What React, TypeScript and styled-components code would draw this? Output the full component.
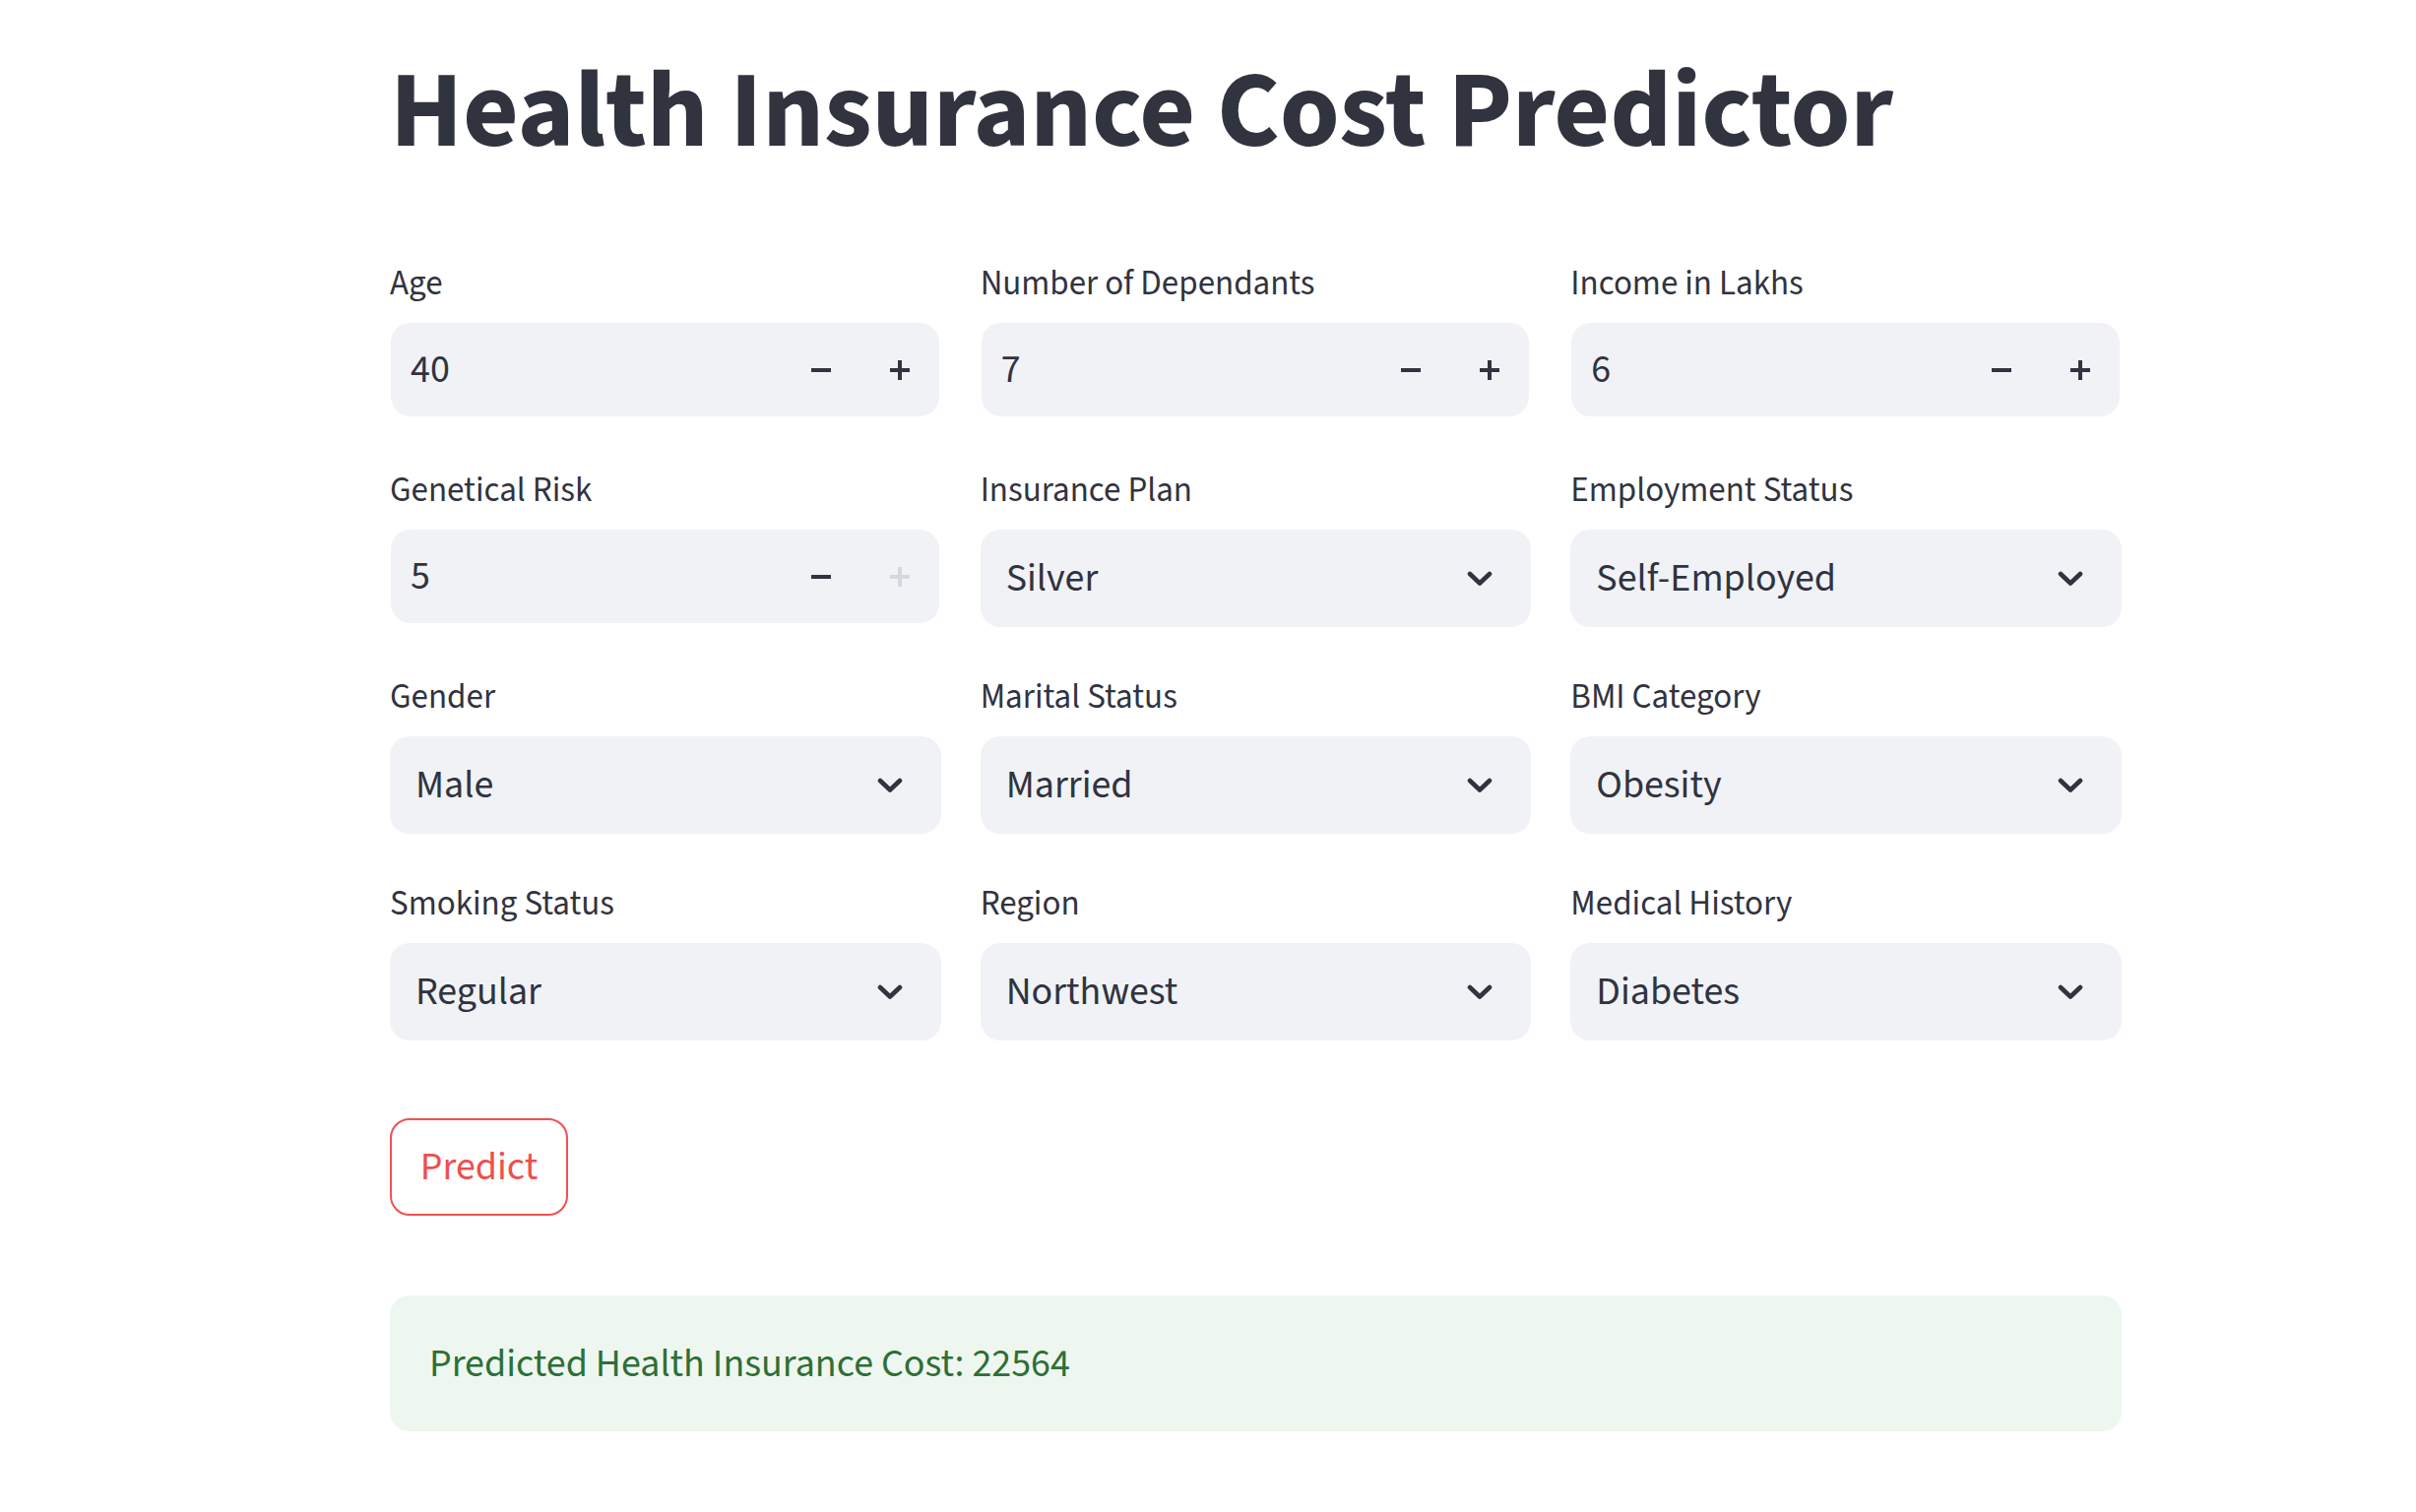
import React from "react";
import styled, { createGlobalStyle } from "styled-components";

const GlobalStyle = createGlobalStyle`
  html, body {
    margin: 0;
    padding: 0;
    background: #ffffff;
  }
  body {
    font-family: "Source Sans Pro", "Source Sans 3", Lato, "Noto Sans", sans-serif;
    color: #31333f;
  }
`;

const Page = styled.main`
  width: 1759px;
  margin-left: 396px;
  padding-top: 48px;
  padding-bottom: 80px;
`;

const Title = styled.h1`
  margin: 0;
  font-size: 110px;
  font-weight: 700;
  line-height: 132px;
  letter-spacing: -0.15px;
  color: #31333f;
`;

const Form = styled.section`
  margin-top: 80px;
  display: grid;
  grid-template-columns: repeat(3, 1fr);
  grid-auto-rows: 170px;
  column-gap: 40px;
  row-gap: 40px;
`;

const Field = styled.div`
  display: flex;
  flex-direction: column;
`;

const Label = styled.label`
  font-size: 35px;
  line-height: 56px;
  height: 56px;
  margin-bottom: 12px;
  color: #31333f;
`;

const NumberBox = styled.div`
  display: flex;
  align-items: center;
  height: 95px;
  margin-right: 2px;
  margin-left: 1px;
  background: #f0f2f6;
  border-radius: 20px;
  overflow: hidden;
`;

const NumberValue = styled.span`
  flex: 1;
  padding-left: 20px;
  font-size: 40px;
  color: #31333f;
`;

const StepButton = styled.button<{ $disabled?: boolean }>`
  width: 80px;
  height: 100%;
  border: none;
  background: transparent;
  padding: 0;
  display: flex;
  align-items: center;
  justify-content: center;
  color: ${(p) => (p.$disabled ? "#d6d8de" : "#31333f")};
  cursor: ${(p) => (p.$disabled ? "not-allowed" : "pointer")};
`;

const SelectBox = styled.div`
  display: flex;
  align-items: center;
  height: 99px;
  background: #f0f2f6;
  border-radius: 20px;
  padding: 0 39px 0 26px;
`;

const SelectValue = styled.span`
  flex: 1;
  font-size: 40px;
  color: #31333f;
`;

const PredictButton = styled.button`
  margin-top: 76px;
  width: 181px;
  height: 99px;
  border: 2px solid #f0514f;
  border-radius: 20px;
  background: #ffffff;
  color: #ee4f4d;
  font-family: inherit;
  font-size: 40px;
  padding: 0;
  display: block;
`;

const SuccessBox = styled.div`
  margin-top: 81px;
  height: 138px;
  box-sizing: border-box;
  display: flex;
  align-items: center;
  padding: 0 40px;
  background: #eef7ef;
  border-radius: 20px;
  color: #2d6f37;
  font-size: 40px;
`;

const Minus = () => (
  <svg width="20" height="20" viewBox="0 0 20 20" aria-hidden>
    <rect x="0" y="8" width="20" height="4" fill="currentColor" />
  </svg>
);

const Plus = () => (
  <svg width="20" height="20" viewBox="0 0 20 20" aria-hidden>
    <rect x="0" y="8" width="20" height="4" fill="currentColor" />
    <rect x="8" y="0" width="4" height="20" fill="currentColor" />
  </svg>
);

const Chevron = () => (
  <svg width="26" height="16" viewBox="0 0 26 16" aria-hidden>
    <path
      d="M3 3 L13 12.5 L23 3"
      fill="none"
      stroke="#31333f"
      strokeWidth="4.6"
      strokeLinecap="round"
      strokeLinejoin="round"
    />
  </svg>
);

type NumField = { kind: "number"; label: string; value: string; plusDisabled?: boolean };
type SelField = { kind: "select"; label: string; value: string };
type FieldDef = NumField | SelField;

const fields: FieldDef[] = [
  { kind: "number", label: "Age", value: "40" },
  { kind: "number", label: "Number of Dependants", value: "7" },
  { kind: "number", label: "Income in Lakhs", value: "6" },
  { kind: "number", label: "Genetical Risk", value: "5", plusDisabled: true },
  { kind: "select", label: "Insurance Plan", value: "Silver" },
  { kind: "select", label: "Employment Status", value: "Self-Employed" },
  { kind: "select", label: "Gender", value: "Male" },
  { kind: "select", label: "Marital Status", value: "Married" },
  { kind: "select", label: "BMI Category", value: "Obesity" },
  { kind: "select", label: "Smoking Status", value: "Regular" },
  { kind: "select", label: "Region", value: "Northwest" },
  { kind: "select", label: "Medical History", value: "Diabetes" },
];

export default function App() {
  return (
    <>
      <GlobalStyle />
      <Page>
        <Title>Health Insurance Cost Predictor</Title>
        <Form>
          {fields.map((f) => (
            <Field key={f.label}>
              <Label>{f.label}</Label>
              {f.kind === "number" ? (
                <NumberBox>
                  <NumberValue>{f.value}</NumberValue>
                  <StepButton aria-label="decrement">
                    <Minus />
                  </StepButton>
                  <StepButton aria-label="increment" $disabled={f.plusDisabled}>
                    <Plus />
                  </StepButton>
                </NumberBox>
              ) : (
                <SelectBox>
                  <SelectValue>{f.value}</SelectValue>
                  <Chevron />
                </SelectBox>
              )}
            </Field>
          ))}
        </Form>
        <PredictButton>Predict</PredictButton>
        <SuccessBox>Predicted Health Insurance Cost: 22564</SuccessBox>
      </Page>
    </>
  );
}
